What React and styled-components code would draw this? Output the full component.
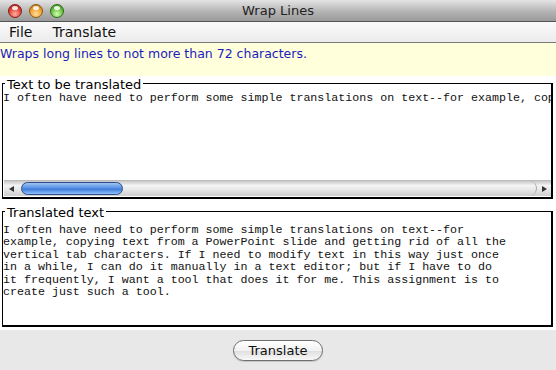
import React from 'react'
import styled, { createGlobalStyle } from 'styled-components'

const GlobalStyle = createGlobalStyle`
  html, body {
    margin: 0;
    padding: 0;
    background: #fff;
  }
`;

const SANS = `"DejaVu Sans", "Liberation Sans", sans-serif`;
const MONO = `"Liberation Mono", "DejaVu Sans Mono", monospace`;

const Window = styled.div`
  width: 556px;
  height: 370px;
  display: flex;
  flex-direction: column;
  overflow: hidden;
  background: #fff;
  font-family: ${SANS};
`;

const TitleBar = styled.div`
  height: 21px;
  display: flex;
  align-items: center;
  position: relative;
  background: linear-gradient(#e4e4e4, #b4b4b4 55%, #9a9a9a);
  border-bottom: 1px solid #555;
`;

const Lights = styled.div`
  display: flex;
  gap: 7px;
  padding-left: 8px;
`;

const Light = styled.span`
  width: 14px;
  height: 14px;
  border-radius: 50%;
  box-sizing: border-box;
  border: 1px solid ${p => p.$edge};
  background: radial-gradient(circle at 50% 75%, ${p => p.$glow} 0%, ${p => p.$color} 55%, ${p => p.$dark} 100%);
  position: relative;
  &::after {
    content: '';
    position: absolute;
    left: 3px;
    top: 1px;
    width: 6px;
    height: 4px;
    border-radius: 50%;
    background: rgba(255, 255, 255, 0.85);
  }
`;

const Title = styled.div`
  position: absolute;
  left: 0;
  right: 0;
  text-align: center;
  font-size: 13px;
  color: #222;
  pointer-events: none;
`;

const MenuBar = styled.div`
  height: 20px;
  display: flex;
  align-items: center;
  gap: 20px;
  padding-left: 9px;
  background: linear-gradient(#fafafa, #ececec);
  border-bottom: 1px solid #7a7a7a;
  font-size: 14px;
  color: #111;
`;

const Info = styled.div`
  height: 33px;
  background: #ffffdc;
  color: #1c1cbe;
  font-size: 12.5px;
  padding: 3px 0 0 0;
  box-sizing: border-box;
`;

const Content = styled.div`
  height: 254px;
  display: flex;
  flex-direction: column;
  gap: 8px;
  padding: 3px 3px 3px 2px;
  box-sizing: border-box;
  background: #fff;
`;

const Group = styled.section`
  display: flex;
  flex-direction: column;
`;

const GroupHeader = styled.div`
  height: 13px;
  display: flex;
`;

const Corner = styled.span`
  width: 2px;
  margin-top: 4px;
  border-top: 1px solid #000;
  border-left: 1px solid #000;
`;

const Label = styled.span`
  padding: 0 2px 0 2px;
  font-size: 13px;
  line-height: 13px;
  color: #000;
  margin-top: -1px;
`;

const HeaderLine = styled.span`
  flex: 1;
  margin-top: 4px;
  border-top: 1px solid #000;
  border-right: 2px solid #000;
`;

const GroupBody = styled.div`
  display: flex;
  flex-direction: column;
  border-left: 1px solid #000;
  border-right: 2px solid #000;
  border-bottom: 2px solid #000;
`;

const TextArea = styled.div`
  height: ${p => p.$h}px;
  padding: ${p => p.$pt}px 3px 0 0;
  box-sizing: border-box;
  font-family: ${MONO};
  font-size: 11.65px;
  line-height: 12.4px;
  color: #111;
  white-space: pre;
  overflow: hidden;
`;

const ScrollBar = styled.div`
  height: 15px;
  display: flex;
  align-items: center;
  margin: 0 0 1px 1px;
  background: linear-gradient(#c8c8c8, #f4f4f4 30%, #e6e6e6 60%, #cfcfcf);
  border-top: 1px solid #bbb;
`;

const Arrow = styled.span`
  width: 14px;
  height: 15px;
  display: flex;
  align-items: center;
  justify-content: center;
  flex: none;
  &::before {
    content: '';
    border-top: 3.5px solid transparent;
    border-bottom: 3.5px solid transparent;
    ${p => (p.$dir === 'left' ? 'border-right: 5px solid #333;' : 'border-left: 5px solid #333;')}
  }
`;

const Track = styled.div`
  flex: 1;
  height: 100%;
  display: flex;
  align-items: center;
  border-right: 1px solid #aaa;
  border-radius: 0 8px 8px 0;
`;

const Thumb = styled.div`
  width: 102px;
  height: 13px;
  margin-left: 3px;
  box-sizing: border-box;
  border-radius: 7px;
  border: 1px solid #2c4d8a;
  background: linear-gradient(#9fc4f3, #5a93e6 45%, #3f7bd8 55%, #8cc1fb);
`;

const Footer = styled.div`
  height: 40px;
  background: #e8e8e8;
  display: flex;
  justify-content: center;
  padding-top: 10px;
  box-sizing: border-box;
`;

const Button = styled.button`
  width: 90px;
  height: 21px;
  border-radius: 11px;
  border: 1px solid #6e6e6e;
  background: linear-gradient(#ffffff, #f2f2f2 50%, #e0e0e0 55%, #f8f8f8);
  font-family: ${SANS};
  font-size: 13px;
  color: #111;
  padding: 0;
  box-shadow: 0 1px 1px rgba(0, 0, 0, 0.15);
`;

const source = 'I often have need to perform some simple translations on text--for example, copying text from a PowerPoint slide and getting rid of all the vertical tab characters.'

const wrapped = [
  'I often have need to perform some simple translations on text--for',
  'example, copying text from a PowerPoint slide and getting rid of all the',
  'vertical tab characters. If I need to modify text in this way just once',
  'in a while, I can do it manually in a text editor; but if I have to do',
  'it frequently, I want a tool that does it for me. This assignment is to',
  'create just such a tool.'
]

function TitledBox({ title, children }) {
  return (
    <Group>
      <GroupHeader>
        <Corner />
        <Label>{title}</Label>
        <HeaderLine />
      </GroupHeader>
      <GroupBody>{children}</GroupBody>
    </Group>
  )
}

export default function App() {
  return (
    <Window>
      <GlobalStyle />
      <TitleBar>
        <Lights>
          <Light $edge="#8a1a14" $color="#e0443a" $dark="#9a1f18" $glow="#ffb0a0" />
          <Light $edge="#8a5a10" $color="#f0a030" $dark="#a8620e" $glow="#ffe0a0" />
          <Light $edge="#2c6a16" $color="#6cc040" $dark="#2e7a18" $glow="#d0ffb0" />
        </Lights>
        <Title>Wrap Lines</Title>
      </TitleBar>
      <MenuBar>
        <span>File</span>
        <span>Translate</span>
      </MenuBar>
      <Info>Wraps long lines to not more than 72 characters.</Info>
      <Content>
        <TitledBox title="Text to be translated">
          <TextArea $h={88} $pt={0}>{source}</TextArea>
          <ScrollBar>
            <Arrow $dir="left" />
            <Track>
              <Thumb />
            </Track>
            <Arrow $dir="right" />
          </ScrollBar>
        </TitledBox>
        <TitledBox title="Translated text">
          <TextArea $h={105} $pt={4}>{wrapped.join('\n')}</TextArea>
        </TitledBox>
      </Content>
      <Footer>
        <Button>Translate</Button>
      </Footer>
    </Window>
  )
}
